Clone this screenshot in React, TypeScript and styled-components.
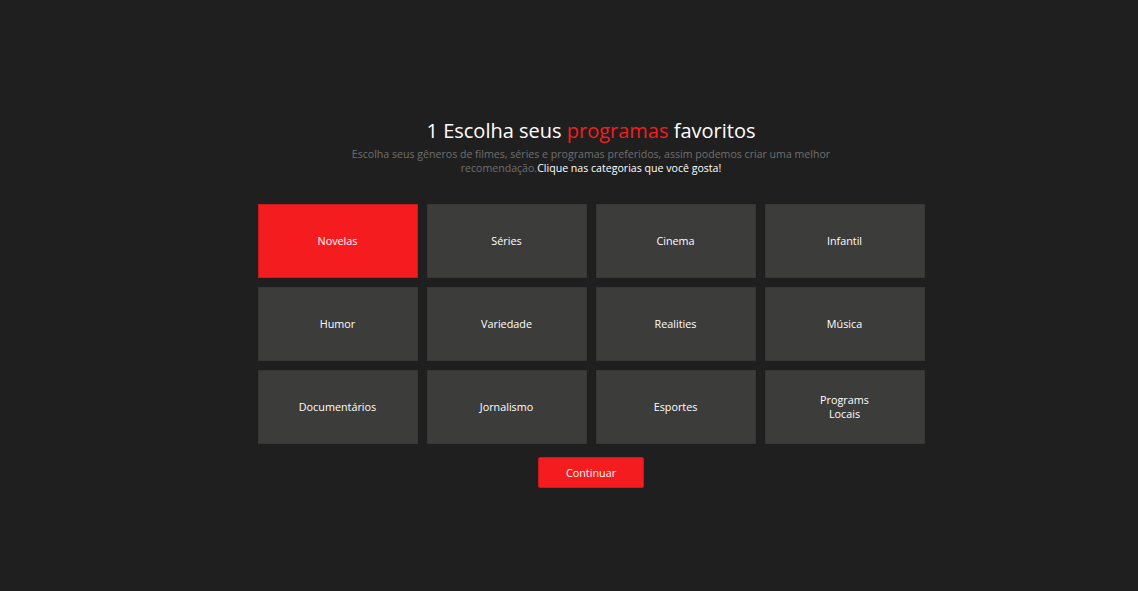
import React, { useState } from "react";
import styled, { createGlobalStyle } from "styled-components";

const GlobalStyle = createGlobalStyle`
  html, body {
    margin: 0;
    padding: 0;
    background: #1f1f1f;
    font-family: "Open Sans", "Noto Sans", sans-serif;
  }
`;

const categories = [
  "Novelas",
  "Séries",
  "Cinema",
  "Infantil",
  "Humor",
  "Variedade",
  "Realities",
  "Música",
  "Documentários",
  "Jornalismo",
  "Esportes",
  "Programs Locais",
];

const App: React.FC = () => {
  const [selected, setSelected] = useState<string[]>(["Novelas"]);

  const toggle = (name: string) => {
    setSelected((prev) =>
      prev.includes(name) ? prev.filter((n) => n !== name) : [...prev, name]
    );
  };

  return (
    <>
      <GlobalStyle />
      <Page>
        <Title>
          1 Escolha seus <Highlight>programas</Highlight> favoritos
        </Title>
        <Subtitle>
          Escolha seus gêneros de filmes, séries e programas preferidos, assim
          podemos criar uma melhor recomendação.
          <Strong>Clique nas categorias que você gosta!</Strong>
        </Subtitle>
        <Grid>
          {categories.map((c) => (
            <Tile
              key={c}
              $active={selected.includes(c)}
              onClick={() => toggle(c)}
            >
              <TileLabel>{c}</TileLabel>
            </Tile>
          ))}
        </Grid>
        <ContinueButton>Continuar</ContinueButton>
      </Page>
    </>
  );
};
export default App;

const Page = styled.div`
  width: 1138px;
  height: 591px;
  display: flex;
  flex-direction: column;
  align-items: center;
  padding: 117px 0 0 44px;
  box-sizing: border-box;
`;

const Title = styled.h1`
  margin: 0;
  font-size: 20px;
  font-weight: 400;
  line-height: 27px;
  color: #ffffff;
`;

const Highlight = styled.span`
  color: #f41c1e;
`;

const Subtitle = styled.p`
  margin: 3px 0 0;
  width: 490px;
  text-align: center;
  font-size: 10.6px;
  line-height: 14px;
  color: #6f6f6f;
`;

const Strong = styled.span`
  color: #ffffff;
`;

const Grid = styled.div`
  margin-top: 29px;
  display: grid;
  grid-template-columns: repeat(4, 160px);
  grid-auto-rows: 74px;
  column-gap: 9px;
  row-gap: 9px;
`;

const Tile = styled.button<{ $active: boolean }>`
  display: flex;
  align-items: center;
  justify-content: center;
  padding: 0 40px;
  border: 1px solid ${({ $active }) => ($active ? "#c8191b" : "#363635")};
  background: ${({ $active }) => ($active ? "#f41c1e" : "#3c3c3b")};
  color: #ffffff;
  font-family: inherit;
  font-size: 10.8px;
  line-height: 14px;
  cursor: pointer;
`;

const TileLabel = styled.span`
  text-align: center;
`;

const ContinueButton = styled.button`
  margin-top: 13px;
  width: 106px;
  height: 31px;
  border: 1px solid #c8191b;
  border-radius: 2px;
  background: #f41c1e;
  color: #ffffff;
  font-family: inherit;
  font-size: 10.8px;
  cursor: pointer;
`;
